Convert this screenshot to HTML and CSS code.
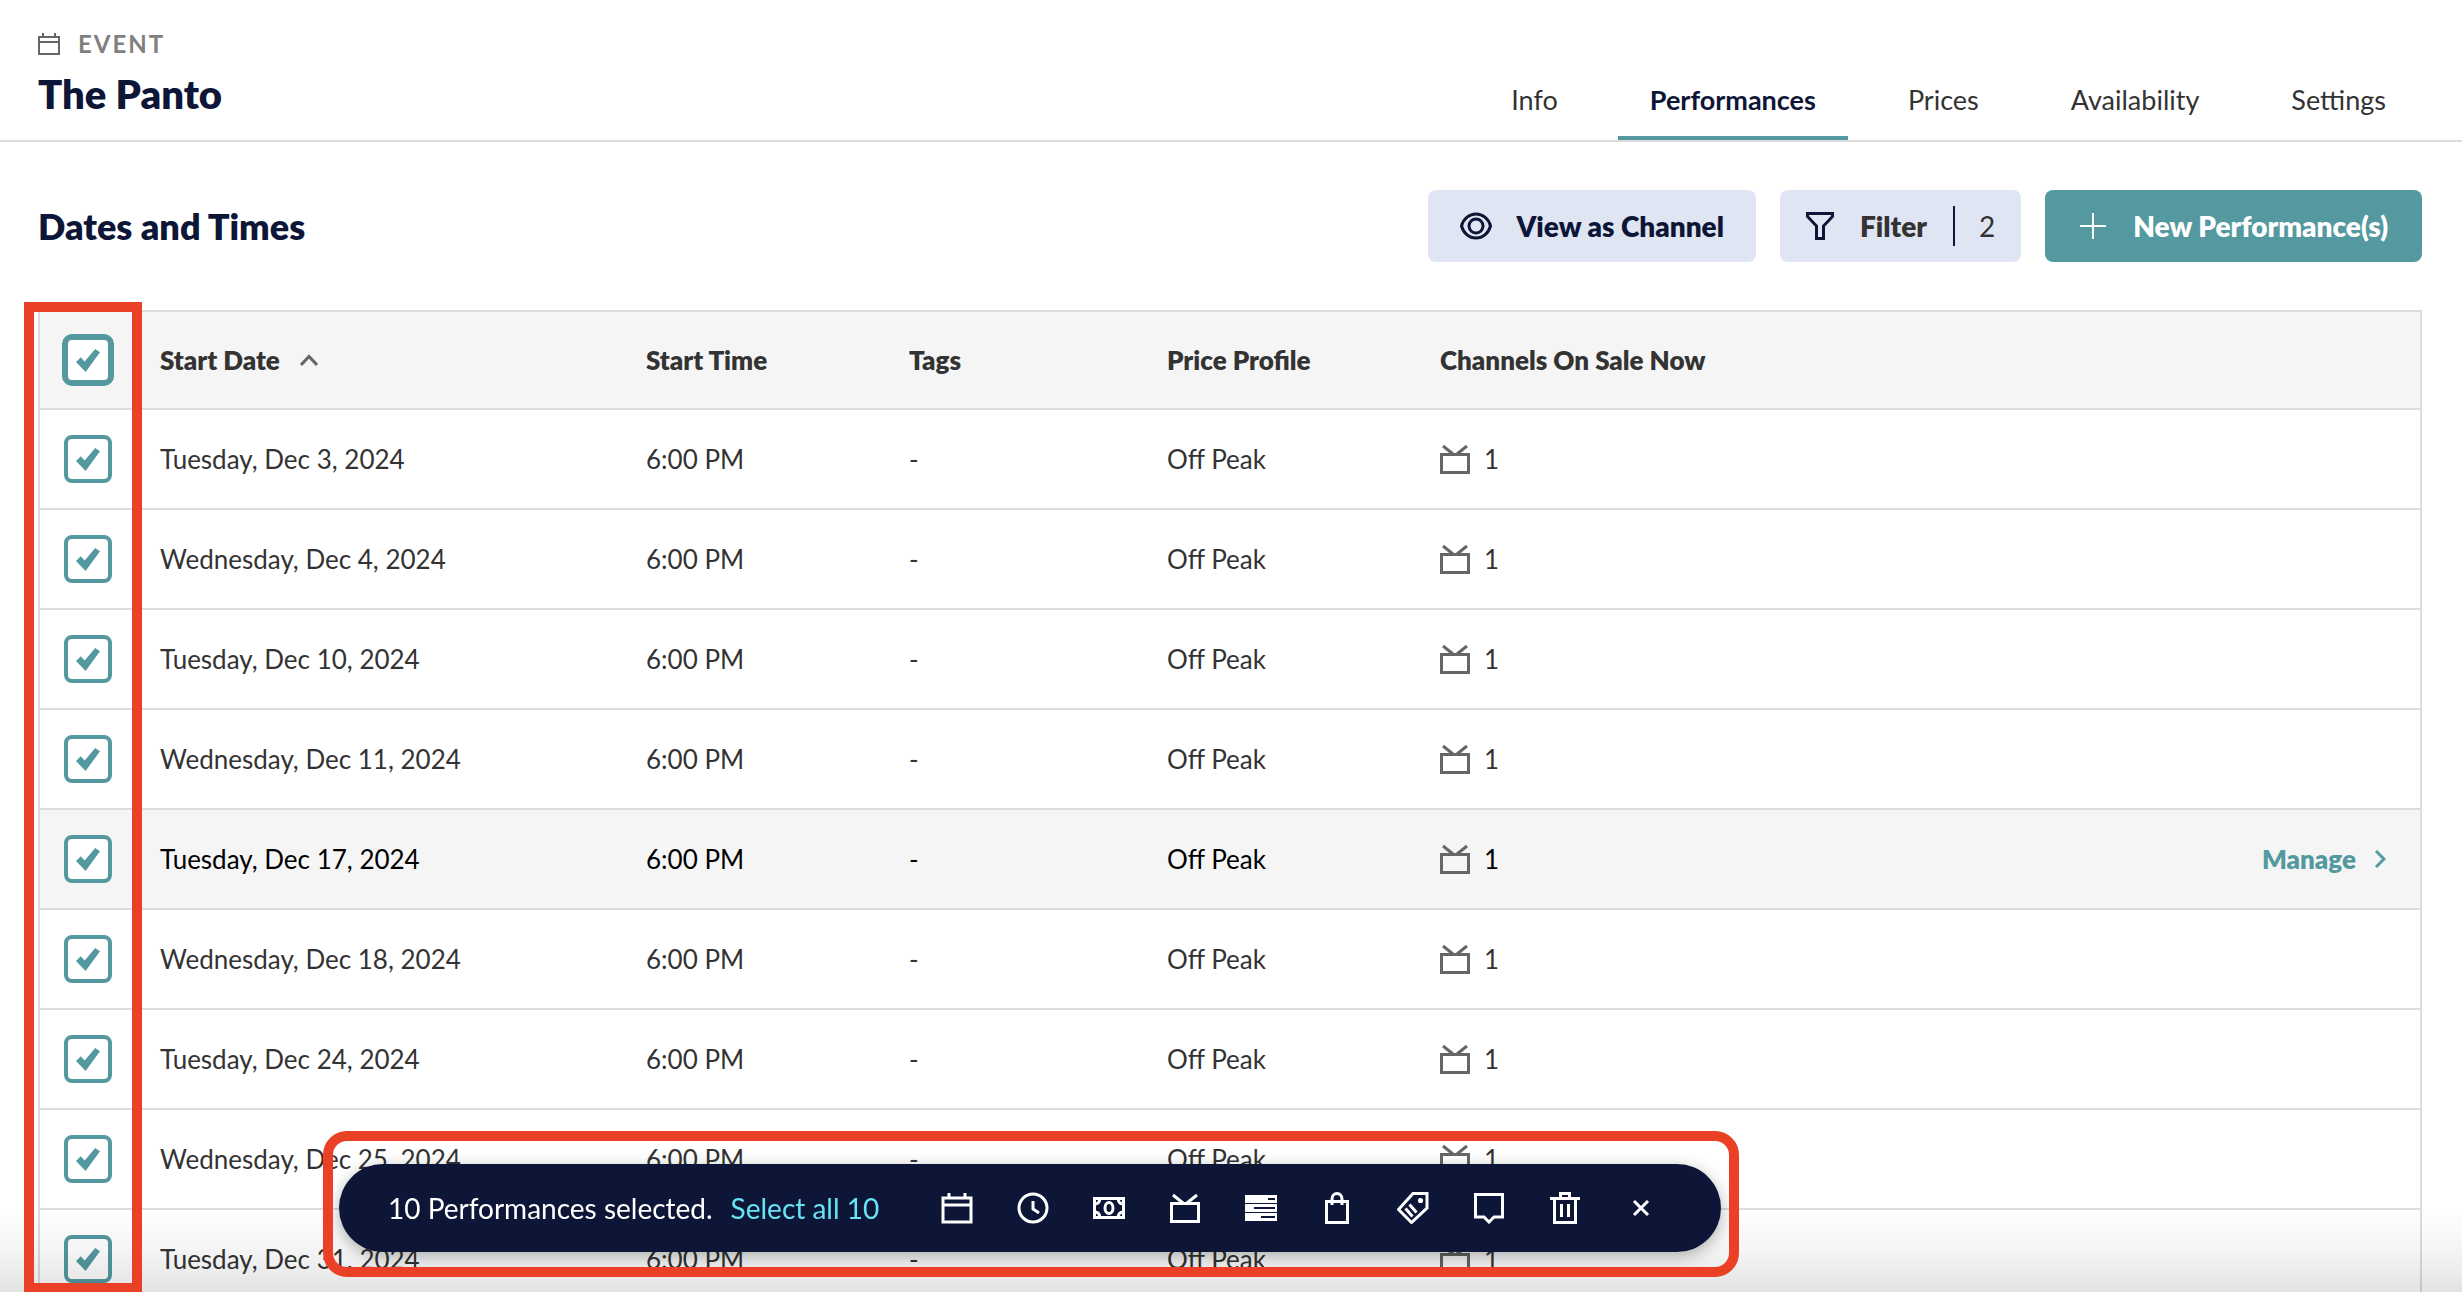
FILE: index.html
```html
<!DOCTYPE html>
<html lang="en">
<head>
<meta charset="utf-8">
<meta name="viewport" content="width=device-width, initial-scale=1">
<title>The Panto – Performances</title>
<link rel="stylesheet" href="styles.css">
</head>
<body>
<svg class="sprite" aria-hidden="true">
  <symbol id="tv" viewBox="0 0 30 30"><path d="M1.500 10.500h27v18h-27zM3 2l10 8M27 2L17 10"/></symbol>
</svg>

<header class="page-header">
  <div class="heading">
    <p class="eyebrow"><svg class="eyebrow-icon" viewBox="0 0 22 22"><path d="M1 4h20v17H1zM1 9h20M5 0v4M17 0v4"/></svg>Event</p>
    <h1>The Panto</h1>
  </div>
  <nav class="tabs">
    <a href="#info">Info</a>
    <a href="#performances" class="active" aria-current="page">Performances</a>
    <a href="#prices">Prices</a>
    <a href="#availability">Availability</a>
    <a href="#settings">Settings</a>
  </nav>
</header>

<main>
  <div class="title-row">
    <h2>Dates and Times</h2>
    <div class="actions">
      <button class="btn" type="button"><svg width="32" height="28" viewBox="0 0 32 28"><path d="M1.500 14C3.500 6.500 9.500 2 16 2s12.500 4.500 14.500 12C28.500 21.500 22.500 26 16 26S3.500 21.500 1.500 14z"/><circle cx="16" cy="14" r="7"/></svg>View as Channel</button>
      <button class="btn btn-filter" type="button"><svg width="28" height="28" viewBox="0 0 28 28"><path d="M1.500 1.500h25v3L17.500 14v12.500h-7V14L1.500 4.500z"/></svg>Filter<span class="count">2</span></button>
      <button class="btn btn-primary" type="button"><svg width="28" height="28" viewBox="0 0 28 28"><path d="M14 1v26M1 14h26"/></svg>New Performance(s)</button>
    </div>
  </div>

  <div class="table-wrap">
    <table>
      <colgroup><col class="c-check"><col class="c-date"><col class="c-time"><col class="c-tags"><col class="c-price"><col></colgroup>
      <thead>
        <tr><th><input type="checkbox" class="focused" checked aria-label="Select all"></th><th>Start Date<svg class="sort" width="18" height="12" viewBox="0 0 18 12"><path d="M1 11l8-8.500L17 11"/></svg></th><th>Start Time</th><th>Tags</th><th>Price Profile</th><th>Channels On Sale Now</th></tr>
      </thead>
      <tbody>
        <tr><td><input type="checkbox" checked aria-label="Tuesday, Dec 3, 2024"></td><td>Tuesday, Dec 3, 2024</td><td>6:00 PM</td><td>-</td><td>Off Peak</td><td><div class="channels"><svg><use href="#tv"/></svg>1</div></td></tr>
        <tr><td><input type="checkbox" checked aria-label="Wednesday, Dec 4, 2024"></td><td>Wednesday, Dec 4, 2024</td><td>6:00 PM</td><td>-</td><td>Off Peak</td><td><div class="channels"><svg><use href="#tv"/></svg>1</div></td></tr>
        <tr><td><input type="checkbox" checked aria-label="Tuesday, Dec 10, 2024"></td><td>Tuesday, Dec 10, 2024</td><td>6:00 PM</td><td>-</td><td>Off Peak</td><td><div class="channels"><svg><use href="#tv"/></svg>1</div></td></tr>
        <tr><td><input type="checkbox" checked aria-label="Wednesday, Dec 11, 2024"></td><td>Wednesday, Dec 11, 2024</td><td>6:00 PM</td><td>-</td><td>Off Peak</td><td><div class="channels"><svg><use href="#tv"/></svg>1</div></td></tr>
        <tr class="hovered"><td><input type="checkbox" checked aria-label="Tuesday, Dec 17, 2024"></td><td>Tuesday, Dec 17, 2024</td><td>6:00 PM</td><td>-</td><td>Off Peak</td><td><div class="channels"><svg><use href="#tv"/></svg>1<a class="manage" href="#manage">Manage<svg class="chevron" width="12" height="20" viewBox="0 0 12 20"><path d="M2 2l8 8-8 8"/></svg></a></div></td></tr>
        <tr><td><input type="checkbox" checked aria-label="Wednesday, Dec 18, 2024"></td><td>Wednesday, Dec 18, 2024</td><td>6:00 PM</td><td>-</td><td>Off Peak</td><td><div class="channels"><svg><use href="#tv"/></svg>1</div></td></tr>
        <tr><td><input type="checkbox" checked aria-label="Tuesday, Dec 24, 2024"></td><td>Tuesday, Dec 24, 2024</td><td>6:00 PM</td><td>-</td><td>Off Peak</td><td><div class="channels"><svg><use href="#tv"/></svg>1</div></td></tr>
        <tr><td><input type="checkbox" checked aria-label="Wednesday, Dec 25, 2024"></td><td>Wednesday, Dec 25, 2024</td><td>6:00 PM</td><td>-</td><td>Off Peak</td><td><div class="channels"><svg><use href="#tv"/></svg>1</div></td></tr>
        <tr><td><input type="checkbox" checked aria-label="Tuesday, Dec 31, 2024"></td><td>Tuesday, Dec 31, 2024</td><td>6:00 PM</td><td>-</td><td>Off Peak</td><td><div class="channels"><svg><use href="#tv"/></svg>1</div></td></tr>
      </tbody>
    </table>
  </div>
</main>

<div class="fade"></div>

<div class="bulk-bar" role="toolbar" aria-label="Bulk actions">
  <span class="selected">10 Performances selected.</span>
  <a href="#all">Select all 10</a>
  <div class="tools">
    <button type="button" aria-label="Change dates"><svg viewBox="0 0 32 32"><path d="M2 6h28v24H2zM2 13h28M8 1v5M24 1v5"/></svg></button>
    <button type="button" aria-label="Change times"><svg viewBox="0 0 32 32"><circle cx="16" cy="16" r="14"/><path d="M16 9v8l6 4"/></svg></button>
    <button type="button" aria-label="Change prices"><svg viewBox="0 0 32 32"><path d="M1.500 6.500h29v19h-29z"/><ellipse cx="16" cy="16" rx="4" ry="5.500"/><path d="M2 12q4 0 5-5M30 12q-4 0-5-5M2 20q4 0 5 5M30 20q-4 0-5 5"/></svg></button>
    <button type="button" aria-label="Channels"><svg viewBox="0 0 32 32"><path d="M2.500 11.500h27v18h-27zM4 3l10 8M28 3L18 11"/></svg></button>
    <button type="button" aria-label="Availability"><svg viewBox="0 0 32 32"><path class="solid" fill-rule="evenodd" d="M0 3h32v8H0zM23 6v2h7V6zM0 12h32v8H0zM9 15v2h21v-2zM0 21h32v8H0zM16 24v2h14v-2z"/></svg></button>
    <button type="button" aria-label="Products"><svg viewBox="0 0 32 32"><path d="M5.500 9.500h21v21h-21zM11 13V7a5 5.500 0 0 1 10 0v6"/></svg></button>
    <button type="button" aria-label="Tags"><svg viewBox="0 0 32 32"><path d="M16 1.500h14V16L14.500 30.500 1.500 17.500zM8.500 16.500l7 8M12.500 12.500l7 8"/><circle class="solid" cx="23.500" cy="8.500" r="2.600"/></svg></button>
    <button type="button" aria-label="Notes"><svg viewBox="0 0 32 32"><path d="M2.500 2.500h27v22.500h-8.500l-5 5-5-5H2.500z"/></svg></button>
    <button type="button" aria-label="Delete"><svg viewBox="0 0 32 32"><path d="M5.500 7v23.500h21V7M1 6.500h30M11.500 6V1.500h9V6M12.500 12v13M19.500 12v13"/></svg></button>
    <button type="button" aria-label="Close"><svg viewBox="0 0 32 32"><path d="M9 9l14 14M23 9L9 23"/></svg></button>
  </div>
</div>

<div class="callout callout-column"></div>
<div class="callout callout-bar"></div>
</body>
</html>
```
FILE: styles.css
```css
* { box-sizing: border-box; }

:root {
  --navy: #0d1637;
  --teal: #5499a0;
  --line: #dcdcdc;
  --text: #333;
  --muted: #666;
}

body {
  margin: 0;
  height: 100vh;
  overflow: hidden;
  background: #fff;
  color: var(--text);
  font: 26px/32px Lato, "Noto Sans", sans-serif;
}

h1, h2, p { margin: 0; }
h1, h2 { color: var(--navy); font-weight: 800; }
h1 { font-size: 40px; line-height: 48px; }
h2 { font-size: 36px; line-height: 48px; }
a { color: inherit; text-decoration: none; }
svg { fill: none; stroke: currentColor; stroke-width: 3; flex: none; }
.solid { fill: currentColor; stroke: none; }
.sprite { display: none; }

.page-header {
  display: flex;
  justify-content: space-between;
  align-items: flex-end;
  padding: 28px 36px 0 38px;
  border-bottom: 2px solid var(--line);
}
.heading { padding-bottom: 22px; }
.eyebrow {
  display: flex;
  align-items: center;
  gap: 18px;
  margin-bottom: 10px;
  color: #808080;
  font-size: 24px;
  font-weight: 700;
  letter-spacing: 2px;
  text-transform: uppercase;
}
.eyebrow-icon { width: 22px; height: 22px; color: var(--muted); stroke-width: 2; }
.tabs { display: flex; gap: 28px; padding-right: 8px; font-size: 27px; }
.tabs a { padding: 0 32px 20px; border-bottom: 4px solid transparent; }
.tabs .active { border-color: var(--teal); color: var(--navy); font-weight: 700; }

main { padding: 48px 40px 48px 38px; }
.title-row {
  display: flex;
  justify-content: space-between;
  align-items: center;
  margin-bottom: 48px;
}
.actions { display: flex; gap: 24px; }
.btn {
  display: flex;
  align-items: center;
  gap: 24px;
  height: 72px;
  padding: 0 32px;
  border: 0;
  border-radius: 8px;
  background: #e0e5f4;
  color: var(--navy);
  font: 800 28px/40px Lato, "Noto Sans", sans-serif;
}
.btn-filter { gap: 26px; padding: 0 26px; color: var(--text); }
.btn-filter svg { color: var(--navy); }
.count { padding-left: 24px; border-left: 2px solid var(--navy); font-weight: 400; }
.btn-primary { gap: 26px; padding: 0 34px; background: var(--teal); color: #fff; }
.btn-primary svg { stroke-width: 2; }

.table-wrap { border: 2px solid var(--line); }
table { width: 100%; border-spacing: 0; table-layout: fixed; }
.c-check { width: 120px; }
.c-date { width: 486px; }
.c-time { width: 263px; }
.c-tags { width: 258px; }
.c-price { width: 273px; }
th, td {
  height: 100px;
  padding: 0;
  border-bottom: 2px solid var(--line);
  text-align: left;
  vertical-align: middle;
}
th { height: 98px; background: #f5f5f5; font-weight: 800; }
.hovered { background: #f5f5f5; color: #000; }
.sort { margin: 0 0 4px 20px; color: var(--muted); }

input[type="checkbox"] {
  display: block;
  width: 48px;
  height: 48px;
  margin: 0 0 0 24px;
  appearance: none;
  border: 4px solid var(--teal);
  border-radius: 8px;
  background: #fff;
}
input[type="checkbox"]::before {
  content: "";
  display: block;
  width: 24px;
  height: 23px;
  margin: 9px 8px;
  background: var(--teal);
  clip-path: polygon(0 57%, 20% 36%, 36% 54%, 80% 0, 100% 14%, 40% 100%);
}
input.focused { box-shadow: 0 0 0 2px var(--teal); }

.channels { display: flex; align-items: center; gap: 14px; }
.channels svg { width: 30px; height: 30px; color: var(--muted); }
.manage {
  display: flex;
  align-items: center;
  gap: 18px;
  margin-left: auto;
  padding-right: 34px;
  color: var(--teal);
  font-weight: 800;
}
.channels .chevron { width: 12px; height: 20px; color: var(--teal); }

.fade {
  position: fixed;
  inset: auto 0 0;
  height: 84px;
  background: linear-gradient(rgba(0, 0, 0, 0), rgba(0, 0, 0, .04) 50%, rgba(0, 0, 0, .11));
}

.bulk-bar {
  position: fixed;
  left: 339px;
  bottom: 40px;
  display: flex;
  align-items: center;
  height: 88px;
  padding: 0 64px 0 49px;
  border-radius: 44px;
  background: var(--navy);
  box-shadow: 0 4px 16px rgba(0, 0, 0, .3);
  color: #fff;
  font-size: 28px;
}
.bulk-bar a { margin-left: 18px; color: #66e3f5; }
.tools { display: flex; gap: 44px; margin-left: 62px; }
.tools button { padding: 0; border: 0; background: none; color: #fff; }
.tools svg { display: block; width: 32px; height: 32px; }

.callout { position: fixed; border: 10px solid #ea4025; pointer-events: none; }
.callout-column { left: 24px; top: 302px; bottom: -1px; width: 118px; }
.callout-bar { left: 323px; bottom: 15px; width: 1416px; height: 146px; border-radius: 24px; }
```
